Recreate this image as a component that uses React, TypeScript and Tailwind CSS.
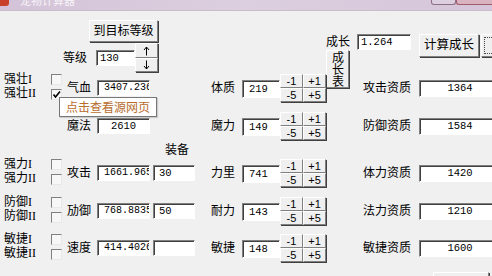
import type { ReactNode } from 'react';

// Win-classic 3D edges
const raised =
  'border border-t-white border-l-white border-r-[#808080] border-b-[#808080] shadow-[1px_1px_0_#404040] bg-[#efefef]';
const sunken =
  'border border-t-[#808080] border-l-[#808080] border-r-white border-b-white shadow-[inset_1px_1px_0_#404040] bg-white';

function Btn({ className = '', children }: { className?: string; children?: ReactNode }) {
  return (
    <div className={`${raised} shrink-0 flex items-center justify-center leading-none ${className}`}>
      {children}
    </div>
  );
}

function Field({ value = '', className = '' }: { value?: string; className?: string }) {
  return (
    <div
      className={`${sunken} shrink-0 overflow-hidden whitespace-nowrap font-['Liberation_Mono',monospace] text-[10.5px] leading-[14px] ${className}`}
    >
      {value}
    </div>
  );
}

function Check({ checked = false }: { checked?: boolean }) {
  return (
    <div className="w-[11px] h-[11px] border border-t-[#808080] border-l-[#808080] border-r-[#e8e8e8] border-b-[#e8e8e8] bg-[#f7f7f7] flex items-center justify-center">
      {checked && (
        <svg width="9" height="9" viewBox="0 0 9 9">
          <path d="M1.5 4.5 L3.5 7 L8 1.5" fill="none" stroke="#000" strokeWidth="1.6" />
        </svg>
      )}
    </div>
  );
}

function Spin() {
  const cell = `${raised} w-[23px] h-[14px] flex items-center justify-center font-['Liberation_Sans',sans-serif] text-[11px] leading-none`;
  return (
    <div className="grid grid-cols-2 w-[46px] h-[28px] shrink-0">
      <div className={cell}>-1</div>
      <div className={cell}>+1</div>
      <div className={cell}>-5</div>
      <div className={cell}>+5</div>
    </div>
  );
}

function Arrow({ down = false }: { down?: boolean }) {
  return (
    <svg width="7" height="10" viewBox="0 0 7 10" className={down ? 'rotate-180' : ''}>
      <path d="M3.5 1 V9.5 M1 4 L3.5 1 L6 4" fill="none" stroke="#000" strokeWidth="1" />
    </svg>
  );
}

interface RowProps {
  mt?: string;
  pair?: [string, string];
  checked?: boolean;
  label: string;
  v1: string;
  v1Class?: string;
  v2?: string;
  label2: string;
  v3: string;
  label3: string;
  v4: string;
}

function StatRow({ mt = '', pair, checked, label, v1, v1Class = 'pl-[6px] text-[10px]', v2, label2, v3, label3, v4 }: RowProps) {
  return (
    <div className={`flex items-center h-[28px] shrink-0 ${mt}`}>
      <div className="ml-[4px] w-[47px] shrink-0 leading-[14px] mb-[4px]">
        {pair && (
          <>
            <div>{pair[0]}</div>
            <div>{pair[1]}</div>
          </>
        )}
      </div>
      <div className="w-[11px] shrink-0 flex flex-col gap-[4px] mb-[2px]">
        {pair && (
          <>
            <Check />
            <Check checked={checked} />
          </>
        )}
      </div>
      <div className="w-[35px] shrink-0 pl-[5px]">{label}</div>
      <Field value={v1} className={`w-[53px] h-[16px] ${v1Class}`} />
      <div className="ml-[3px] w-[42px] shrink-0">
        {v2 !== undefined && <Field value={v2} className="w-[42px] h-[16px] pl-[5px]" />}
      </div>
      <div className="w-[47px] shrink-0 pl-[16px]">{label2}</div>
      <Field value={v3} className="w-[38px] h-[18px] pl-[6px] mt-[2px] leading-[16px]" />
      <Spin />
      <div className="w-[37px] shrink-0" />
      <div className="w-[56px] shrink-0">{label3}</div>
      <Field value={v4} className="w-[82px] h-[17px] text-center leading-[15px]" />
    </div>
  );
}

export default function App() {
  return (
    <div className="relative w-[492px] h-[276px] overflow-hidden bg-[#f0f0f0] text-black text-[12px] font-['Liberation_Serif','Noto_Sans_CJK_SC',serif]">
      {/* title bar (cut off at top) */}
      <div className="flex items-start h-[11px] bg-linear-to-r from-[#d4c3d8] via-[#dccfdf] to-[#d6c5da] border-b border-[#c9bdcc]">
        <div className="w-[9px] h-[6px] bg-[#c8402a] rounded-br-[3px] shrink-0" />
        <div className="ml-[11px] -mt-[6px] text-[11px] leading-[12px] text-white/80 font-['Noto_Sans_CJK_SC',sans-serif]">
          宠物计算器
        </div>
        <div className="ml-auto mr-0 flex">
          <div className="w-[25px] h-[5px] border border-t-0 border-[#8f6f82] rounded-b-[3px] bg-[#dccfe0]" />
          <div className="w-[36px] h-[5px] border border-t-0 border-r-0 border-[#a05a6a] rounded-bl-[3px] bg-[#d9b4c0]" />
        </div>
      </div>

      {/* top section */}
      <div className="flex h-[63px]">
        <div className="w-[326px] shrink-0 flex flex-col">
          <Btn className="ml-[89px] mt-[9px] w-[69px] h-[22px]">到目标等级</Btn>
          <div className="flex items-center h-[29px] mt-[1px]">
            <span className="ml-[63px] w-[33px] shrink-0">等级</span>
            <Field value="130" className="w-[39px] h-[16px] pl-[3px]" />
            <div className="flex flex-col w-[23px] shrink-0">
              <Btn className="w-[23px] h-[15px]">
                <Arrow />
              </Btn>
              <Btn className="w-[23px] h-[14px]">
                <Arrow down />
              </Btn>
            </div>
          </div>
        </div>
        <div className="flex flex-col mt-[23px]">
          <div className="flex items-start h-[16px]">
            <span className="w-[31px] shrink-0 leading-[16px]">成长</span>
            <Field value="1.264" className="w-[54px] h-[16px] pl-[3px]" />
            <Btn className="ml-[8px] w-[60px] h-[23px] text-[12.5px]">计算成长</Btn>
            <Btn className="ml-[2px] w-[20px] h-[23px]">
              <div className="w-[14px] h-[17px] border border-dotted border-[#444]" />
            </Btn>
          </div>
          <Btn className="w-[23px] h-[38px]">
            <span className="[writing-mode:vertical-rl] text-[12px] leading-[16px] font-['Noto_Sans_CJK_SC',sans-serif]">
              成长表
            </span>
          </Btn>
        </div>
      </div>

      <StatRow pair={['强壮I', '强壮II']} checked label="气血" v1="3407.236" label2="体质" v3="219" label3="攻击资质" v4="1364" />
      <StatRow mt="mt-[10px]" label="魔法" v1="2610" v1Class="text-center" label2="魔力" v3="149" label3="防御资质" v4="1584" />
      <div className="h-[19px] flex items-center pl-[165px]">装备</div>
      <StatRow pair={['强力I', '强力II']} label="攻击" v1="1661.965" v2="30" label2="力里" v3="741" label3="体力资质" v4="1420" />
      <StatRow mt="mt-[10px]" pair={['防御I', '防御II']} label="劢御" v1="768.8835" v2="50" label2="耐力" v3="143" label3="法力资质" v4="1210" />
      <StatRow mt="mt-[9px]" pair={['敏捷I', '敏捷II']} label="速度" v1="414.4026" v2="" label2="敏捷" v3="148" label3="敏捷资质" v4="1600" />
      <div className="flex mt-[10px]">
        <Btn className="ml-[433px] w-[56px] h-[20px]" />
      </div>

      {/* hover tooltip */}
      <div className="absolute left-[59px] top-[97px] w-[98px] h-[20px] border border-[#777] bg-white shadow-[1px_1px_1px_rgba(0,0,0,0.15)] flex items-center pl-[6px] text-[12px] text-[#b86c2e] font-['Noto_Sans_CJK_SC',sans-serif]">
        点击查看源网页
      </div>
    </div>
  );
}
